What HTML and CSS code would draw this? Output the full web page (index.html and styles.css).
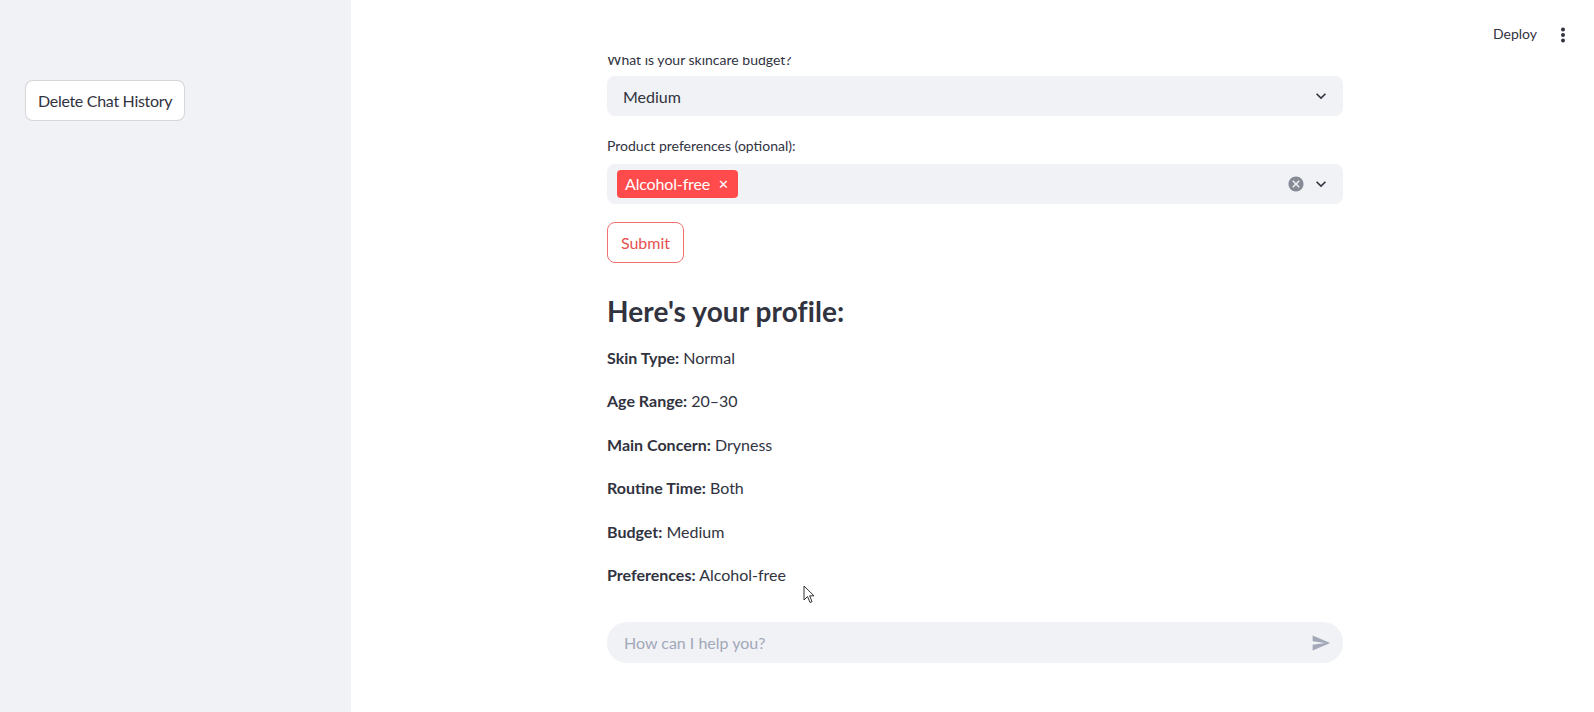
FILE: index.html
```html
<!DOCTYPE html>
<html lang="en">
<head>
<meta charset="utf-8">
<title>Skincare Assistant</title>
<link rel="stylesheet" href="styles.css">
</head>
<body>
<div class="app">
  <aside class="sidebar">
    <button class="btn-secondary">Delete Chat History</button>
  </aside>
  <main class="main">
    <header class="topbar">
      <span class="deploy">Deploy</span>
      <svg class="kebab" width="6" height="16" viewBox="0 0 6 16"><circle cx="3" cy="2.5" r="2" fill="#31333F"/><circle cx="3" cy="8" r="2" fill="#31333F"/><circle cx="3" cy="13.5" r="2" fill="#31333F"/></svg>
    </header>
    <div class="block">
      <div class="label label-first">What is your skincare budget?</div>
      <div class="select">
        <span class="select-value">Medium</span>
        <svg class="chev" width="20" height="20" viewBox="0 0 24 24"><path d="M16.59 8.59L12 13.17 7.41 8.59 6 10l6 6 6-6z" fill="#31333F"/></svg>
      </div>
      <div class="label label-second">Product preferences (optional):</div>
      <div class="select multi">
        <span class="tag">Alcohol-free <span class="tag-x">&#x2715;</span></span>
        <span class="spacer"></span>
        <svg class="clear" width="18" height="18" viewBox="0 0 24 24"><path d="M12 2C6.47 2 2 6.47 2 12s4.470 10 10 10 10-4.47 10-10S17.53 2 12 2zm5 13.59L15.59 17 12 13.41 8.41 17 7 15.59 10.59 12 7 8.41 8.41 7 12 10.59 15.590 7 17 8.41 13.41 12 17 15.59z" fill="#878995"/></svg>
        <svg class="chev" width="20" height="20" viewBox="0 0 24 24"><path d="M16.59 8.59L12 13.17 7.41 8.59 6 10l6 6 6-6z" fill="#31333F"/></svg>
      </div>
      <button class="btn-submit">Submit</button>
      <h3 class="heading">Here's your profile:</h3>
      <div class="profile">
        <p><strong>Skin Type:</strong> Normal</p>
        <p><strong>Age Range:</strong> 20–30</p>
        <p><strong>Main Concern:</strong> Dryness</p>
        <p><strong>Routine Time:</strong> Both</p>
        <p><strong>Budget:</strong> Medium</p>
        <p><strong>Preferences:</strong> Alcohol-free</p>
      </div>
      <div class="chat">
        <span class="placeholder">How can I help you?</span>
        <svg class="send" width="20" height="20" viewBox="0 0 24 24"><path d="M2.01 21L23 12 2.01 3 2 10l15 2-15 2z" fill="#A3A8B8"/></svg>
      </div>
    </div>
    <svg class="cursor" width="12" height="19" viewBox="0 0 12 19"><path d="M1 1 L1 15 L4.5 11.5 L7 17.5 L9 16.6 L6.6 10.8 L11 10.8 Z" fill="#fff" stroke="#333" stroke-width="1" stroke-linejoin="round"/></svg>
  </main>
</div>
</body>
</html>
```

FILE: styles.css
```css
* { box-sizing: border-box; }
html, body { margin: 0; padding: 0; }
body {
  width: 1594px;
  height: 712px;
  overflow: hidden;
  font-family: Lato, "Source Sans Pro", "Noto Sans", sans-serif;
  color: #31333F;
  background: #fff;
}
.app { display: flex; height: 712px; }
.sidebar {
  width: 351px;
  flex: none;
  background: #F0F2F6;
  padding: 80px 0 0 25px;
}
.btn-secondary {
  font-family: inherit;
  font-size: 16px;
  letter-spacing: -0.3px;
  color: #31333F;
  background: #fff;
  border: 1px solid rgba(49, 51, 63, 0.2);
  border-radius: 8px;
  width: 160px;
  height: 41px;
  padding: 0 12px;
  white-space: nowrap;
}
.main {
  flex: 1;
  position: relative;
  overflow: hidden;
}
.topbar {
  position: absolute;
  top: 0; left: 0; right: 0;
  height: 57px;
  background: #fff;
  z-index: 2;
  display: flex;
  align-items: flex-start;
  justify-content: flex-end;
  padding: 23px 28px 0 0;
  gap: 23px;
}
.deploy { font-size: 14px; line-height: 20px; margin-top: 1px; }
.kebab { margin-top: 4px; }
.block {
  width: 736px;
  margin-left: 256px;
  padding-top: 48px;
  display: flex;
  flex-direction: column;
}
.label { font-size: 14px; line-height: 24px; height: 24px; }
.label-first { margin-bottom: 4px; }
.label-second { margin-top: 18px; margin-bottom: 6px; }
.select {
  height: 40px;
  background: #F0F2F6;
  border-radius: 8px;
  display: flex;
  align-items: center;
  padding: 0 12px 0 16px;
}
.select-value { flex: 1; font-size: 16px; }
.chev { flex: none; }
.multi { padding-left: 10px; }
.spacer { flex: 1; }
.clear { margin-right: 6px; }
.tag {
  background: #FF4B4B;
  color: #fff;
  border-radius: 4px;
  height: 28px;
  line-height: 28px;
  padding: 0 9px 0 8px;
  font-size: 16px;
  letter-spacing: -0.15px;
  display: inline-flex;
  align-items: center;
  gap: 8px;
}
.tag-x { font-size: 13px; font-weight: 300; }
.btn-submit {
  align-self: flex-start;
  margin-top: 18px;
  width: 77px;
  height: 41px;
  border: 1px solid #F07070;
  border-radius: 8px;
  background: #fff;
  color: #E5504F;
  font-family: inherit;
  font-size: 16px;
  padding: 0;
}
.heading {
  margin: 30px 0 0;
  font-size: 28px;
  font-weight: 700;
  line-height: 36px;
  letter-spacing: 0.1px;
}
.profile { margin-top: 16px; }
.profile p {
  margin: 0 0 17.8px;
  font-size: 16px;
  line-height: 25.6px;
}
.profile strong { font-weight: 700; }
.chat {
  margin-top: 17px;
  height: 41px;
  background: #F0F2F6;
  border-radius: 20px;
  display: flex;
  align-items: center;
  padding: 0 12px 0 17px;
}
.placeholder { flex: 1; color: #A3A8B8; font-size: 16px; }
.cursor { position: absolute; top: 585px; left: 452px; z-index: 3; }
```
